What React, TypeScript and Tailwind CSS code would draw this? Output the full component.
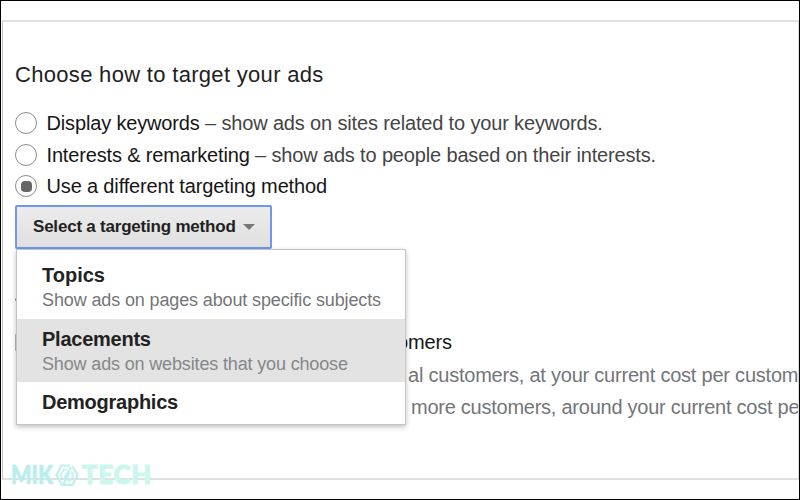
type OptionProps = { name: string; detail?: string; checked?: boolean };

function RadioOption({ name, detail, checked }: OptionProps) {
  return (
    <label className="flex h-[31.700px] items-center text-[20px] tracking-[-0.155px]">
      <span className="flex size-[22px] shrink-0 items-center justify-center rounded-full border border-[#8c8c8c] bg-white">
        {checked && <span className="size-[11px] rounded-[4px] bg-[#666]" />}
      </span>
      <span className="ml-[9.500px] whitespace-pre text-[#161616]">{name}</span>
      {detail && <span className="whitespace-pre text-[#444]">{detail}</span>}
    </label>
  );
}

function Menu() {
  return (
    <div className="absolute top-[44px] left-px h-[176px] w-[390px] border border-[#c4c4c4] bg-white shadow-[0_2px_5px_rgba(0,0,0,0.25)]">
      <div className="h-[69px] pt-[13px] pl-[25px]">
        <div className="text-[20px] leading-[25px] font-bold text-[#222]">Topics</div>
        <div className="text-[18px] leading-[25px] tracking-[-0.130px] whitespace-nowrap text-[#73757a]">Show ads on pages about specific subjects</div>
      </div>
      <div className="h-[63px] bg-[#e3e3e3] pt-[8px] pl-[25px]">
        <div className="text-[20px] leading-[25px] font-bold tracking-[-0.250px] text-[#222]">Placements</div>
        <div className="text-[18px] leading-[25px] tracking-[-0.150px] whitespace-nowrap text-[#85878a]">Show ads on websites that you choose</div>
      </div>
      <div className="pt-[8px] pl-[25px] text-[20px] leading-[25px] font-bold tracking-[-0.250px] text-[#222]">Demographics</div>
    </div>
  );
}

function Watermark() {
  return (
    <div className="absolute top-[461px] left-[10px] flex h-[25px] items-center font-['Lato',sans-serif] text-[26px] leading-[25px] font-black">
      <span className="w-[44px] origin-left scale-x-[0.830] text-[#b9eeec] [-webkit-text-stroke:0.600px_#b9eeec]">MIK</span>
      <svg width="24" height="22" viewBox="0 0 24 22" fill="none" stroke="#bdf1ec" strokeWidth="2.2">
        <path d="M15 1.500H6.500L1.500 11L6.500 20.500H8M16 3L9 15M17.500 2L22.500 11L17.500 20.800H8L14.500 8.500" />
        <path d="M12 5.500H9L5.500 11L8 15.500M16 7.500L18.500 11L15.500 16.500H12.500" strokeWidth="1.500" />
      </svg>
      <span className="ml-[3px] tracking-[0.600px] text-[#ccf7ee] [-webkit-text-stroke:1px_#ccf7ee]">TECH</span>
    </div>
  );
}

export default function App() {
  return (
    <div className="relative h-[500px] w-[800px] overflow-hidden border border-black bg-white pt-[19px] pl-px font-['Liberation_Sans',Arial,sans-serif]">
      <div className="h-[460px] w-[797px] overflow-hidden border border-t-2 border-b-2 border-[#e0e0e0] border-l-[#c4c4c4] pl-[12px]">
        <h1 className="mt-[38px] h-[30px] text-[22px] leading-[30px] tracking-[0.310px] whitespace-nowrap text-[#222]">Choose how to target your ads</h1>
        <div className="mt-[17px] h-[96px]">
          <RadioOption name="Display keywords" detail=" – show ads on sites related to your keywords." />
          <RadioOption name="Interests & remarketing" detail=" – show ads to people based on their interests." />
          <RadioOption name="Use a different targeting method" checked />
        </div>
        <div className="relative mt-[2px]">
          <button className="flex h-[44px] w-[257px] items-center rounded-[2px] border-2 border-[#6c98ee] bg-linear-to-b from-[#ececec] to-[#e0e0e0] pl-[16px] text-[17px] font-bold text-[#222]">
            <span className="tracking-[-0.210px] whitespace-nowrap">Select a targeting method</span>
            <span className="ml-[7px] border-x-[6px] border-t-[6px] border-x-transparent border-t-[#777]" />
          </button>
          <Menu />
        </div>
        <div className="pt-[49px]">
          <div className="h-[3px] w-[5px] rounded-full bg-[#a87a5a]" />
          <div className="mt-[26px] flex h-[30px] items-center">
            <div className="size-[19px] rounded-[2px] border border-[#bbb]" />
            <div className="ml-[327px] text-[20px] tracking-[-0.150px] whitespace-nowrap text-[#161616]">customers</div>
          </div>
          <div className="mt-[2px] pl-[393px] text-[20px] leading-[32px] tracking-[-0.220px] whitespace-nowrap text-[#73757a]">
            <div>al customers, at your current cost per custom</div>
            <div className="pl-[3px] tracking-[-0.250px]">more customers, around your current cost pe</div>
          </div>
        </div>
      </div>
      <Watermark />
    </div>
  );
}
